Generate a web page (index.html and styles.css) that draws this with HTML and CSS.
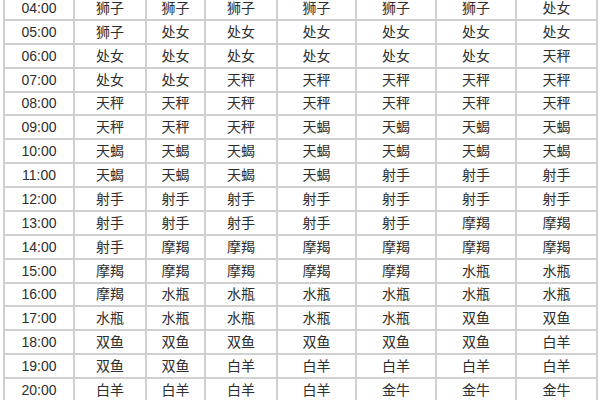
FILE: index.html
```html
<!DOCTYPE html>
<html lang="zh">
<head>
<meta charset="utf-8">
<link rel="stylesheet" href="styles.css">
</head>
<body>
<table class="zodiac">
<colgroup>
<col class="c-time"><col class="c1"><col class="c2"><col class="c3"><col class="c4"><col class="c5"><col class="c6"><col class="c7">
</colgroup>
<tbody>
<tr><td>04:00</td><td>狮子</td><td>狮子</td><td>狮子</td><td>狮子</td><td>狮子</td><td>狮子</td><td>处女</td></tr>
<tr><td>05:00</td><td>狮子</td><td>处女</td><td>处女</td><td>处女</td><td>处女</td><td>处女</td><td>处女</td></tr>
<tr><td>06:00</td><td>处女</td><td>处女</td><td>处女</td><td>处女</td><td>处女</td><td>处女</td><td>天秤</td></tr>
<tr><td>07:00</td><td>处女</td><td>处女</td><td>天秤</td><td>天秤</td><td>天秤</td><td>天秤</td><td>天秤</td></tr>
<tr><td>08:00</td><td>天秤</td><td>天秤</td><td>天秤</td><td>天秤</td><td>天秤</td><td>天秤</td><td>天秤</td></tr>
<tr><td>09:00</td><td>天秤</td><td>天秤</td><td>天秤</td><td>天蝎</td><td>天蝎</td><td>天蝎</td><td>天蝎</td></tr>
<tr><td>10:00</td><td>天蝎</td><td>天蝎</td><td>天蝎</td><td>天蝎</td><td>天蝎</td><td>天蝎</td><td>天蝎</td></tr>
<tr><td>11:00</td><td>天蝎</td><td>天蝎</td><td>天蝎</td><td>天蝎</td><td>射手</td><td>射手</td><td>射手</td></tr>
<tr><td>12:00</td><td>射手</td><td>射手</td><td>射手</td><td>射手</td><td>射手</td><td>射手</td><td>射手</td></tr>
<tr><td>13:00</td><td>射手</td><td>射手</td><td>射手</td><td>射手</td><td>射手</td><td>摩羯</td><td>摩羯</td></tr>
<tr><td>14:00</td><td>射手</td><td>摩羯</td><td>摩羯</td><td>摩羯</td><td>摩羯</td><td>摩羯</td><td>摩羯</td></tr>
<tr><td>15:00</td><td>摩羯</td><td>摩羯</td><td>摩羯</td><td>摩羯</td><td>摩羯</td><td>水瓶</td><td>水瓶</td></tr>
<tr><td>16:00</td><td>摩羯</td><td>水瓶</td><td>水瓶</td><td>水瓶</td><td>水瓶</td><td>水瓶</td><td>水瓶</td></tr>
<tr><td>17:00</td><td>水瓶</td><td>水瓶</td><td>水瓶</td><td>水瓶</td><td>水瓶</td><td>双鱼</td><td>双鱼</td></tr>
<tr><td>18:00</td><td>双鱼</td><td>双鱼</td><td>双鱼</td><td>双鱼</td><td>双鱼</td><td>双鱼</td><td>白羊</td></tr>
<tr><td>19:00</td><td>双鱼</td><td>双鱼</td><td>白羊</td><td>白羊</td><td>白羊</td><td>白羊</td><td>白羊</td></tr>
<tr><td>20:00</td><td>白羊</td><td>白羊</td><td>白羊</td><td>白羊</td><td>金牛</td><td>金牛</td><td>金牛</td></tr>
</tbody>
</table>
</body>
</html>
```
FILE: styles.css
```css
html, body {
  margin: 0;
  padding: 0;
  background: #ffffff;
  overflow: hidden;
}
.zodiac {
  margin: -5px 0 0 3px;
  border-collapse: collapse;
  table-layout: fixed;
  width: 593px;
  font-family: "Liberation Sans", "Noto Sans CJK SC", sans-serif;
  font-size: 14px;
  color: #2e2e2e;
}
.c-time { width: 70px; }
.c1 { width: 72px; }
.c2 { width: 59px; }
.c3 { width: 72px; }
.c4 { width: 79px; }
.c5 { width: 80px; }
.c6 { width: 80px; }
.c7 { width: 81px; }
.zodiac tr {
  height: 23.875px;
}
.zodiac td {
  border: 2px solid #d0d0d0;
  padding: 0;
  text-align: center;
  vertical-align: middle;
  line-height: 18px;
  white-space: nowrap;
}
```
